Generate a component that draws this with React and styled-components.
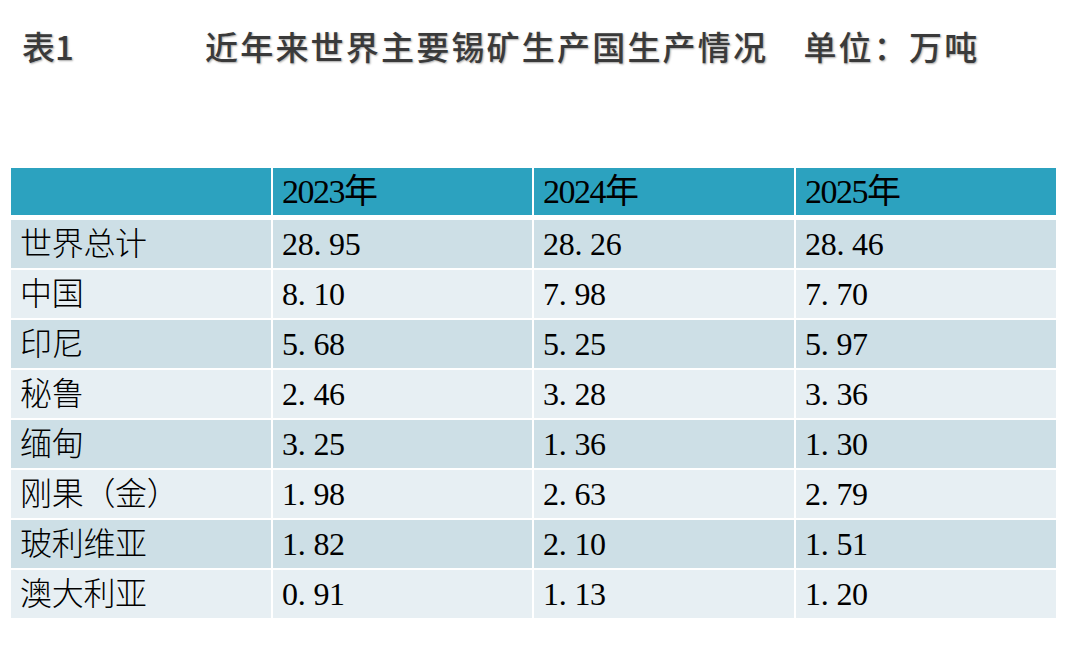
import React from "react";
import styled, { createGlobalStyle } from "styled-components";

const Global = createGlobalStyle`
  html, body { margin: 0; padding: 0; background: #ffffff; }
  body { width: 1081px; height: 648px; overflow: hidden; }
`;

const Page = styled.div`
  width: 1081px;
  height: 648px;
  background: #ffffff;
  display: flex;
  flex-direction: column;
`;

const TitleBar = styled.div`
  display: flex;
  align-items: center;
  height: 34px;
  margin-top: 29px;
  padding-left: 22px;
  font-family: "Noto Sans CJK SC", "Noto Sans", sans-serif;
  font-size: 33px;
  font-weight: 500;
  color: #3a3a3a;
  text-shadow: 1px 1px 2px rgba(0, 0, 0, 0.35);
  white-space: pre;
`;

const TableLabel = styled.div`
  width: 183px;
  flex: none;
`;

const TitleText = styled.div`
  letter-spacing: 2.2px;
`;

const Table = styled.div`
  margin-top: 105px;
  margin-left: 11px;
  display: flex;
  flex-direction: column;
  gap: 2px;
`;

const Row = styled.div`
  display: grid;
  grid-template-columns: 260px 259px 260px 260px;
  column-gap: 2px;
  height: ${(p) => (p.$head ? "47px" : "48px")};
  margin-bottom: ${(p) => (p.$head ? "3px" : "0")};
`;

const tones = {
  head: "#2ca2bf",
  dark: "#cddfe6",
  light: "#e7eff3",
};

const Cell = styled.div`
  background: ${(p) => tones[p.$tone]};
  display: flex;
  align-items: center;
  padding-left: 9px;
  font-family: "Liberation Serif", "Noto Sans CJK SC", serif;
  font-size: ${(p) => (p.$tone === "head" ? "34px" : "32px")};
  letter-spacing: ${(p) => (p.$tone === "head" ? "-1.5px" : "-0.3px")};
  font-weight: ${(p) => (p.$tone === "head" ? 400 : 300)};
  color: #000000;
  line-height: 1;
`;

const Dot = styled.span`
  margin-right: 0.25em;
`;

const Num = ({ v }) => {
  const [a, b] = v.split(".");
  return (
    <span>
      {a}
      <Dot>.</Dot>
      {b}
    </span>
  );
};

const years = ["2023年", "2024年", "2025年"];

const data = [
  ["世界总计", "28.95", "28.26", "28.46"],
  ["中国", "8.10", "7.98", "7.70"],
  ["印尼", "5.68", "5.25", "5.97"],
  ["秘鲁", "2.46", "3.28", "3.36"],
  ["缅甸", "3.25", "1.36", "1.30"],
  ["刚果（金）", "1.98", "2.63", "2.79"],
  ["玻利维亚", "1.82", "2.10", "1.51"],
  ["澳大利亚", "0.91", "1.13", "1.20"],
];

export default function App() {
  return (
    <Page>
      <Global />
      <TitleBar>
        <TableLabel>表1</TableLabel>
        <TitleText>近年来世界主要锡矿生产国生产情况　单位：万吨</TitleText>
      </TitleBar>
      <Table>
        <Row $head>
          <Cell $tone="head" />
          {years.map((y) => (
            <Cell key={y} $tone="head">
              {y}
            </Cell>
          ))}
        </Row>
        {data.map((r, i) => {
          const tone = i % 2 === 0 ? "dark" : "light";
          return (
            <Row key={r[0]}>
              <Cell $tone={tone}>{r[0]}</Cell>
              {r.slice(1).map((v, j) => (
                <Cell key={j} $tone={tone}>
                  <Num v={v} />
                </Cell>
              ))}
            </Row>
          );
        })}
      </Table>
    </Page>
  );
}
